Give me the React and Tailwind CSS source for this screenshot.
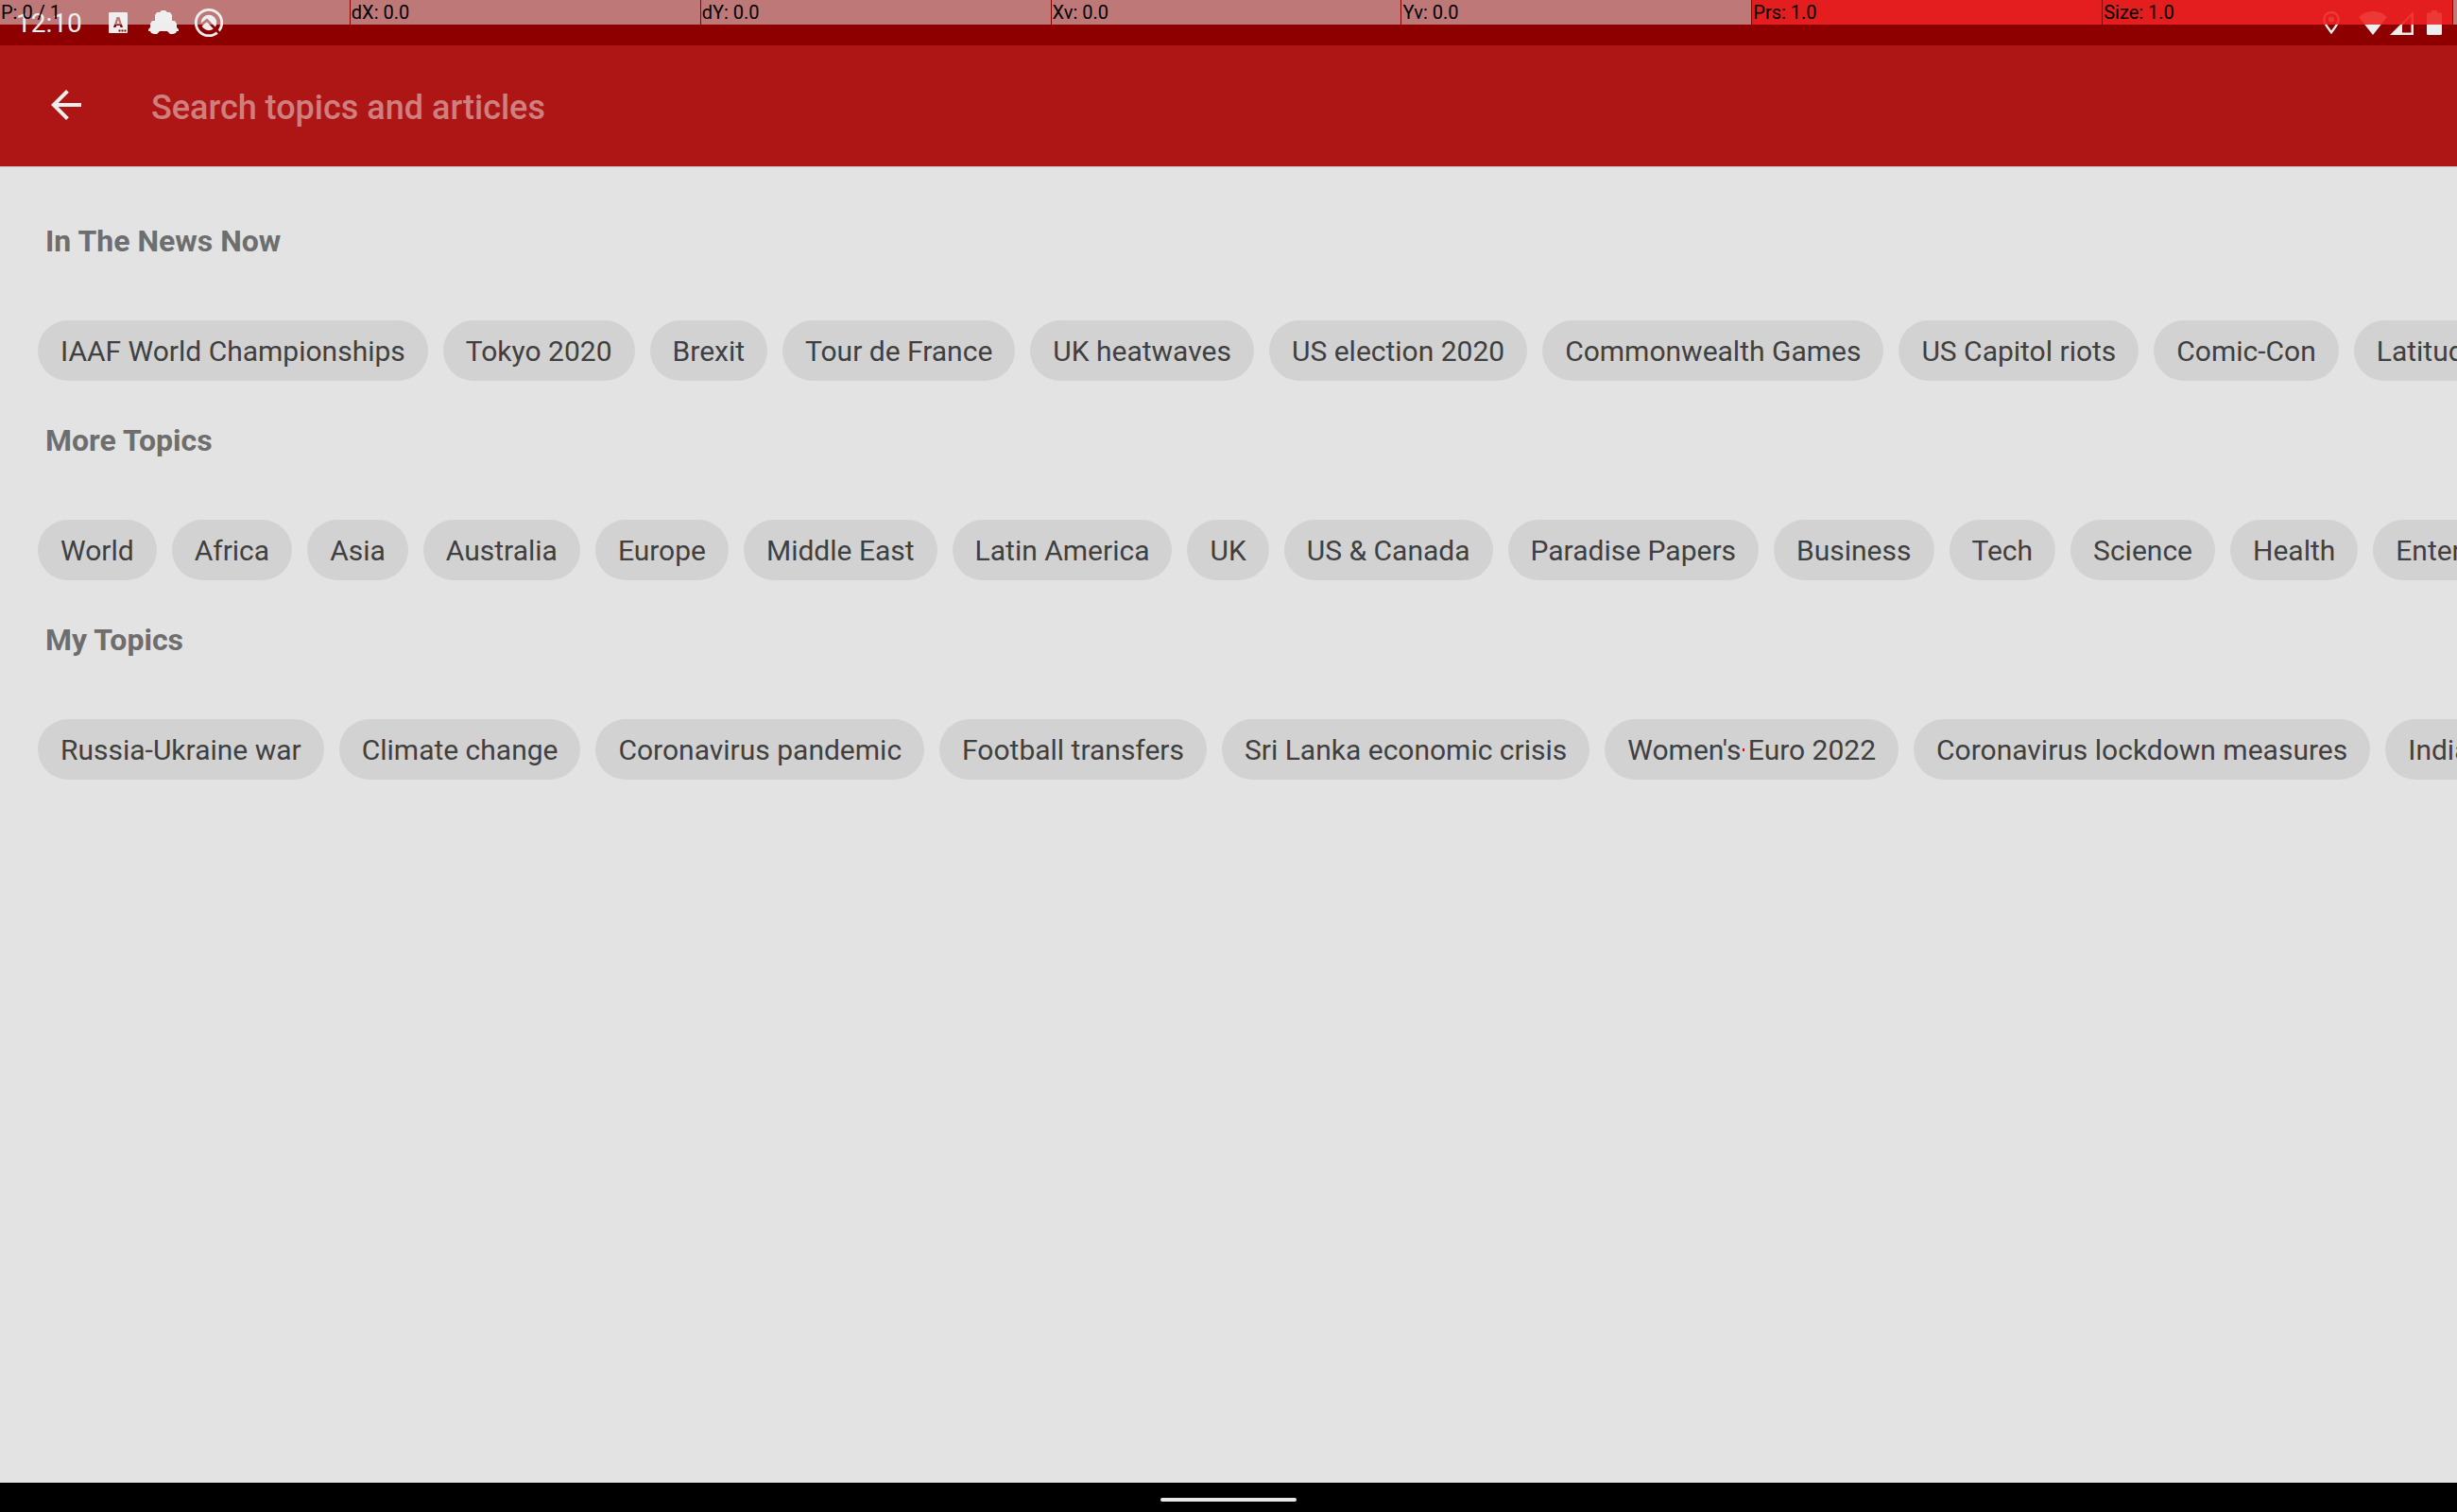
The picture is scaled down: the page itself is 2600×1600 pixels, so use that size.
import React from 'react';

const SECTIONS = [
  {
    title: 'In The News Now',
    topics: ['IAAF World Championships', 'Tokyo 2020', 'Brexit', 'Tour de France', 'UK heatwaves', 'US election 2020', 'Commonwealth Games', 'US Capitol riots', 'Comic-Con', 'Latitude'],
  },
  {
    title: 'More Topics',
    topics: ['World', 'Africa', 'Asia', 'Australia', 'Europe', 'Middle East', 'Latin America', 'UK', 'US & Canada', 'Paradise Papers', 'Business', 'Tech', 'Science', 'Health', 'Entertainment'],
  },
  {
    title: 'My Topics',
    topics: ['Russia-Ukraine war', 'Climate change', 'Coronavirus pandemic', 'Football transfers', 'Sri Lanka economic crisis', "Women's Euro 2022", 'Coronavirus lockdown measures', 'India'],
  },
];

const POINTER_CELLS = [
  { label: 'P: 0 / 1' },
  { label: 'dX: 0.0' },
  { label: 'dY: 0.0' },
  { label: 'Xv: 0.0' },
  { label: 'Yv: 0.0' },
  { label: 'Prs: 1.0', hot: true },
  { label: 'Size: 1.0', hot: true },
];

function KeyboardIcon() {
  return (
    <svg width="20" height="22" viewBox="0 0 20 22" aria-hidden="true">
      <path
        fill="currentColor"
        fillRule="evenodd"
        d="M1 0H19Q20 0 20 1V21Q20 22 19 22H1Q0 22 0 21V1Q0 0 1 0ZM5 16H7.5L8.2 14H11.8L12.5 16H15L11.4 5H8.6ZM8.8 11.8L10 8L11.2 11.8ZM10.5 18.5V20.5H12.5V18.5ZM13.5 18.5V20.5H15.5V18.5ZM16.5 18.5V20.5H18.5V18.5Z"
      />
    </svg>
  );
}

function CarIcon() {
  return (
    <svg width="32" height="26" viewBox="0 0 32 26" aria-hidden="true">
      <path
        fill="currentColor"
        d="M7 11V5L9 2H12L14 0H18L20 2H23L25 5V11H28L30 14V18L32 20V22H30L29 24L26 25H23L20 22H12L9 25H6L3 24L2 22H0V20L2 18V14L4 11Z"
      />
    </svg>
  );
}

function BlockedImageIcon() {
  return (
    <svg width="32" height="32" viewBox="0 0 32 32" fill="none" aria-hidden="true">
      <mask id="slash">
        <rect width="32" height="32" fill="#fff" />
        <path d="M7 18.8L14 13.4L28 28" stroke="#000" strokeWidth="2.8" />
      </mask>
      <g mask="url(#slash)">
        <circle cx="16" cy="16" r="13.7" stroke="currentColor" strokeWidth="2.8" />
        <circle cx="16" cy="16" r="8.3" fill="currentColor" />
      </g>
    </svg>
  );
}

function PinIcon() {
  return (
    <svg width="18" height="24" viewBox="0 0 18 24" fill="none" aria-hidden="true">
      <path d="M9 22.3C5 17 1.2 12.5 1.2 8.8A7.8 7.8 0 0 1 16.8 8.8C16.8 12.5 13 17 9 22.3Z" stroke="currentColor" strokeWidth="2.3" />
      <circle cx="9" cy="8.5" r="3" fill="currentColor" />
    </svg>
  );
}

function WifiIcon() {
  return (
    <svg width="30" height="25" viewBox="0 0 30 25" aria-hidden="true">
      <path fill="currentColor" d="M0 6Q6 0 15 0T30 6L15 25Z" />
    </svg>
  );
}

function SignalIcon() {
  return (
    <svg width="25" height="25" viewBox="0 0 25 25" aria-hidden="true">
      <path fill="currentColor" fillRule="evenodd" d="M25 0V25H0ZM13 14.5V22.5H22.5V5Z" />
    </svg>
  );
}

function BatteryIcon() {
  return (
    <svg width="16" height="26" viewBox="0 0 16 26" aria-hidden="true">
      <path fill="currentColor" d="M5 0H11V2.5H14.5Q16 2.5 16 4V24.5Q16 26 14.5 26H1.5Q0 26 0 24.5V4Q0 2.5 1.5 2.5H5Z" />
    </svg>
  );
}

function StatusBar() {
  return (
    <div className="relative h-12 shrink-0 bg-[#8e0000] text-[#eeeeee]">
      <div className="flex h-full items-center justify-between pr-4 pl-[17px]">
        <div className="flex items-center">
          <time className="mr-7 pt-0.5 text-[28px] leading-[48px]">12:10</time>
          <KeyboardIcon />
          <span className="ml-[22px]"><CarIcon /></span>
          <span className="ml-4"><BlockedImageIcon /></span>
        </div>
        <div className="flex items-center">
          <PinIcon />
          <span className="ml-5"><WifiIcon /></span>
          <span className="ml-[3px]"><SignalIcon /></span>
          <span className="ml-3.5"><BatteryIcon /></span>
        </div>
      </div>
      <div className="absolute inset-x-0 top-0 flex h-[26px] text-xl leading-[26px] text-black">
        <div className="grid flex-1 grid-cols-7">
          {POINTER_CELLS.map(({ label, hot }) => (
            <div key={label} className="flex pr-px">
              <span className={hot ? 'flex-1 bg-[#ee2222]/89 pl-px' : 'flex-1 bg-[#f0f0f0]/50 pl-px'}>{label}</span>
            </div>
          ))}
        </div>
        <div className="w-1 bg-[#f0f0f0]/50" />
      </div>
    </div>
  );
}

function SearchBar() {
  return (
    <header className="flex h-32 shrink-0 items-center bg-[#ae1615] pl-[46px] shadow-[0_1px_0_#d2cccc]">
      <button type="button" aria-label="Back" className="flex h-16 w-16 items-center text-[#eeeeee]">
        <svg width="48" height="48" viewBox="0 0 24 24" className="-mt-0.5 shrink-0" aria-hidden="true">
          <path fill="currentColor" d="M20 11H7.83l5.59-5.59L12 4l-8 8 8 8 1.41-1.41L7.83 13H20v-2z" />
        </svg>
      </button>
      <input
        type="text"
        aria-label="Search topics and articles"
        placeholder="Search topics and articles"
        className="ml-[50px] h-16 flex-1 bg-transparent pt-1 text-4xl font-medium text-white outline-none placeholder:text-[#d07f7f]"
      />
    </header>
  );
}

function TopicSection({ title, topics }) {
  return (
    <section>
      <h2 className="mb-16 pl-12 text-[32px] leading-10 font-bold text-[#6e6e6e]">{title}</h2>
      <div className="flex gap-4 overflow-hidden pl-10">
        {topics.map((topic) => (
          <button key={topic} type="button" className="h-16 shrink-0 rounded-full bg-[#d2d2d2] px-6 text-[30px] whitespace-nowrap text-[#404040]">
            {topic}
          </button>
        ))}
      </div>
    </section>
  );
}

export default function App() {
  return (
    <div className="relative flex min-h-screen flex-col overflow-hidden bg-[#e3e3e3] font-['Roboto',sans-serif]">
      <StatusBar />
      <SearchBar />
      <main className="flex flex-1 flex-col gap-[43px] pt-[59px]">
        {SECTIONS.map((section) => (
          <TopicSection key={section.title} {...section} />
        ))}
      </main>
      <div className="flex h-[31px] shrink-0 justify-center bg-black pt-4">
        <div className="h-1 w-36 rounded-full bg-[#e8e8e8]" />
      </div>
      {/* last touch position */}
      <div className="absolute top-[792px] left-[1844px] h-[3px] w-0.5 bg-red-600" />
    </div>
  );
}
